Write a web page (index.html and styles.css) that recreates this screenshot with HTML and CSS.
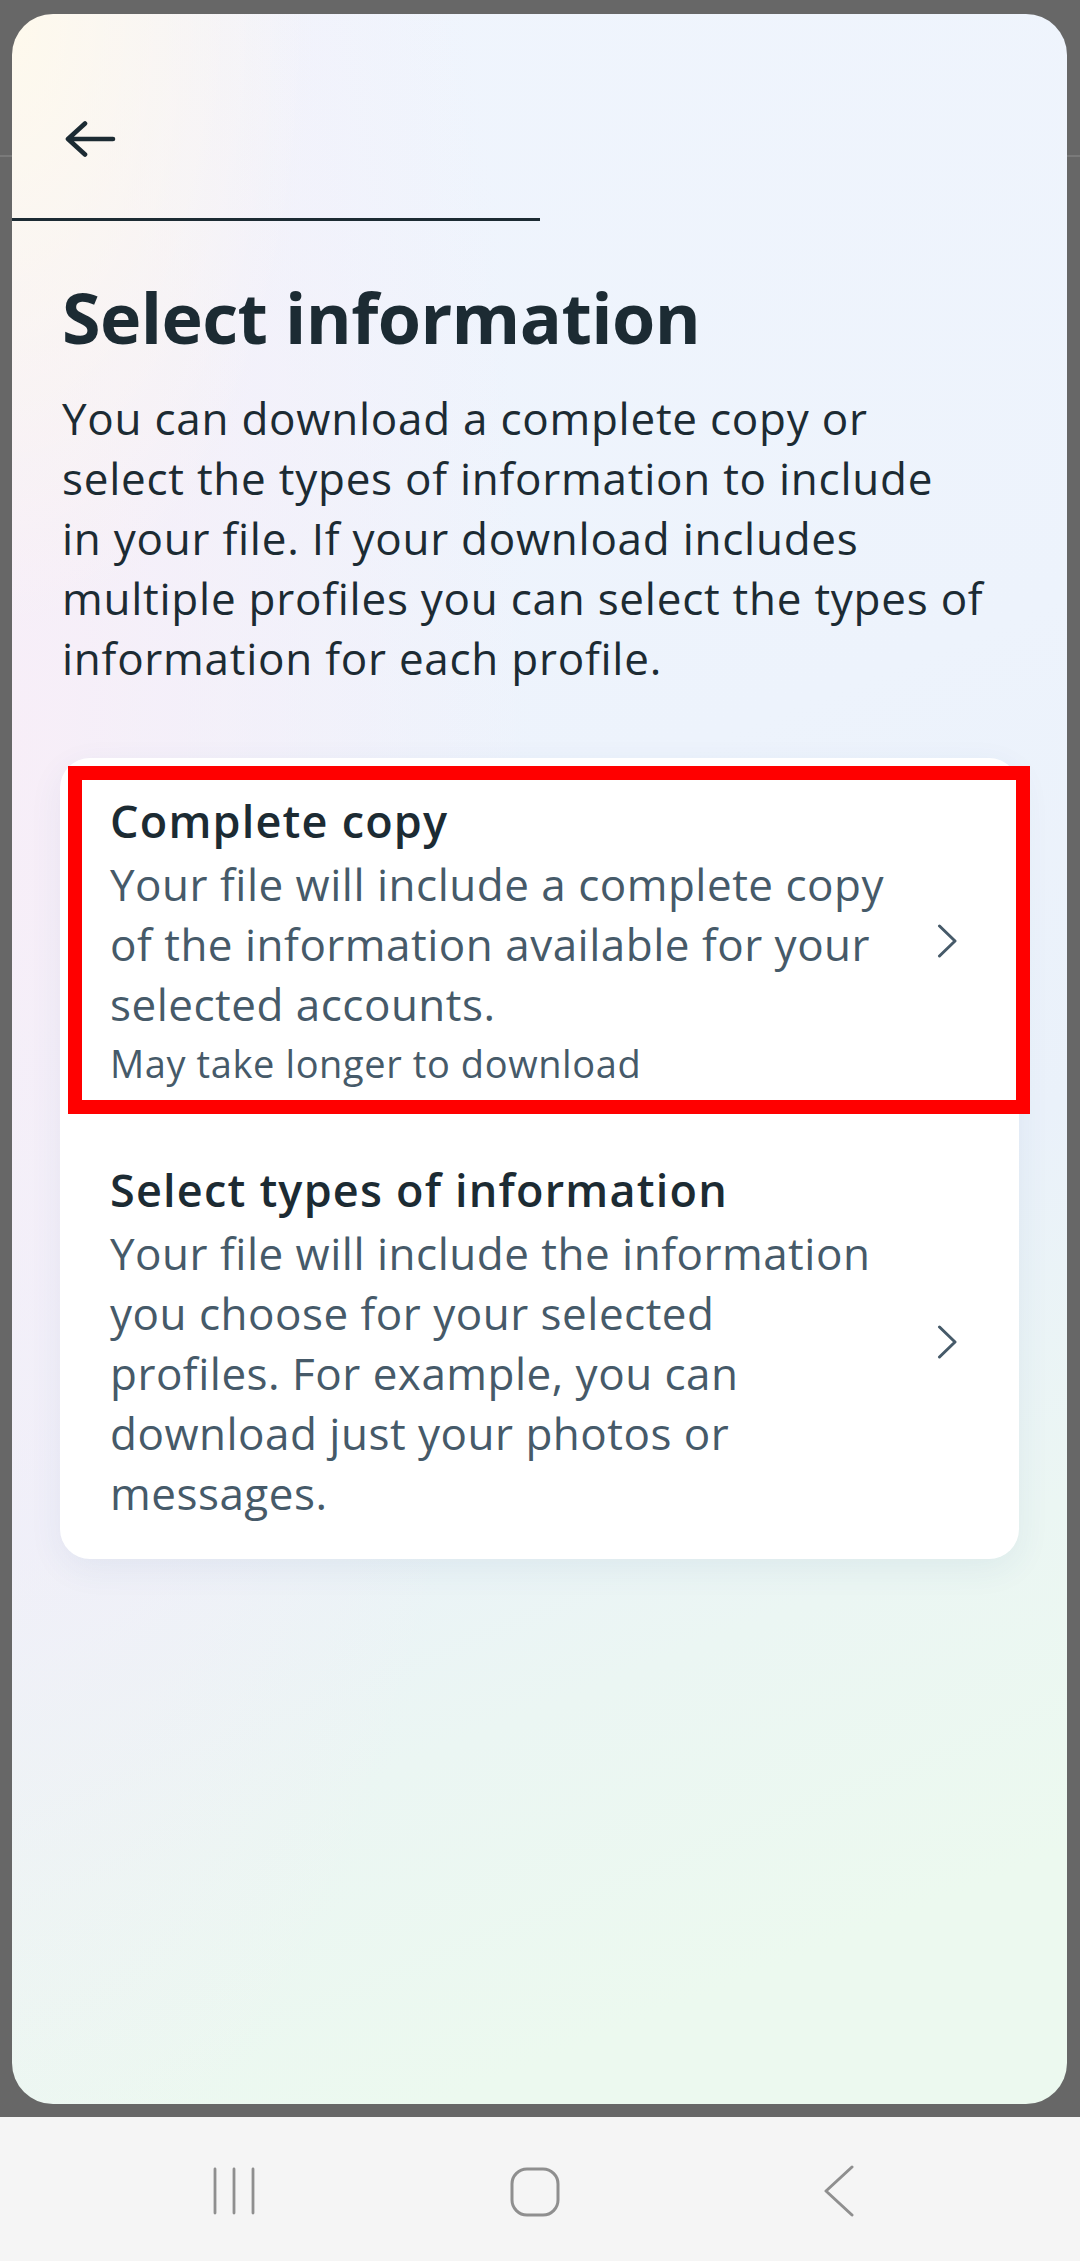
FILE: index.html
```html
<!DOCTYPE html>
<html lang="en">
<head>
<meta charset="utf-8">
<title>Select information</title>
<link rel="stylesheet" href="styles.css">
</head>
<body>
<div class="screen">
  <div class="sheet">
    <div class="header">
      <svg class="back" width="52" height="40" viewBox="0 0 52 40" aria-label="Back">
        <path d="M3 20 H48 M20 4.5 L3 20 L20 35.5" fill="none" stroke="#1c2b33" stroke-width="4.6" stroke-linecap="round" stroke-linejoin="round"/>
      </svg>
    </div>
    <div class="progress"></div>
    <div class="content">
      <h1 class="title">Select information</h1>
      <p class="intro">You can download a complete copy or<br>select the types of information to include<br>in your file. If your download includes<br>multiple profiles you can select the types of<br>information for each profile.</p>
      <div class="card">
        <div class="option">
          <div class="option-text">
            <div class="option-title">Complete copy</div>
            <div class="option-desc">Your file will include a complete copy<br>of the information available for your<br>selected accounts.</div>
            <div class="option-note">May take longer to download</div>
          </div>
          <svg class="chev" width="22" height="34" viewBox="0 0 22 34"><path d="M3.5 2 L19 17 L3.5 32" fill="none" stroke="#465a69" stroke-width="3" stroke-linecap="round" stroke-linejoin="round"/></svg>
        </div>
        <div class="option">
          <div class="option-text">
            <div class="option-title">Select types of information</div>
            <div class="option-desc">Your file will include the information<br>you choose for your selected<br>profiles. For example, you can<br>download just your photos or<br>messages.</div>
          </div>
          <svg class="chev" width="22" height="34" viewBox="0 0 22 34"><path d="M3.5 2 L19 17 L3.5 32" fill="none" stroke="#465a69" stroke-width="3" stroke-linecap="round" stroke-linejoin="round"/></svg>
        </div>
        <div class="highlight"></div>
      </div>
    </div>
  </div>
  <div class="nav">
    <svg class="nav-recents" width="44" height="48" viewBox="0 0 44 48"><path d="M3 2 V46 M22 2 V46 M41 2 V46" fill="none" stroke="#8f8f8f" stroke-width="2.8" stroke-linecap="round"/></svg>
    <svg class="nav-home" width="50" height="50" viewBox="0 0 50 50"><rect x="2" y="2" width="46" height="46" rx="15" fill="none" stroke="#8f8f8f" stroke-width="3"/></svg>
    <svg class="nav-back" width="32" height="52" viewBox="0 0 32 52"><path d="M29 2 L3 26 L29 50" fill="none" stroke="#8f8f8f" stroke-width="3" stroke-linecap="round" stroke-linejoin="round"/></svg>
  </div>
</div>
</body>
</html>
```

FILE: styles.css
```css
* { box-sizing: border-box; }

html, body {
  margin: 0;
  padding: 0;
}

body {
  width: 1080px;
  height: 2261px;
  overflow: hidden;
  background: linear-gradient(to bottom, #676767 0, #676767 155px, #7a7a7a 155px, #7a7a7a 157px, #676767 157px);
  font-family: "Open Sans", "Noto Sans", "Liberation Sans", sans-serif;
  color: #1c2b33;
}

.screen {
  display: flex;
  flex-direction: column;
  height: 2261px;
}

.sheet {
  margin: 14px 13px 0 12px;
  height: 2090px;
  border-radius: 41px;
  overflow: hidden;
  background:
    radial-gradient(ellipse 300px 620px at 0 0, rgba(255, 250, 236, 0.95), rgba(255, 250, 236, 0) 100%),
    radial-gradient(ellipse 520px 1500px at 0 35%, rgba(249, 237, 247, 0.85), rgba(249, 237, 247, 0) 100%),
    linear-gradient(158deg, #f0f5fd 0%, #edf3fc 40%, #eaf1fa 60%, #ebf6f3 76%, #ecf9ef 90%, #ecf9ef 100%);
}

.header {
  height: 204px;
  padding: 105px 0 0 53px;
}

.back { display: block; }

.progress {
  width: 528px;
  height: 3px;
  background: #1c2b33;
}

.content {
  padding: 0 48px;
}

.title {
  margin: 54px 0 0 2px;
  font-size: 70px;
  line-height: 84px;
  font-weight: 700;
  letter-spacing: -0.6px;
  white-space: nowrap;
}

.intro {
  margin: 29px 0 0 2px;
  font-size: 44px;
  line-height: 60px;
  font-weight: 400;
  letter-spacing: 0.75px;
  white-space: nowrap;
}

.card {
  position: relative;
  margin-top: 70px;
  background: #ffffff;
  border-radius: 30px;
  box-shadow: 0 10px 34px rgba(40, 80, 140, 0.07);
}

.option {
  display: flex;
  align-items: center;
  padding: 33px 61px 36px 50px;
}

.option-text {
  flex: 1;
  min-width: 0;
  white-space: nowrap;
}

.option-title {
  font-size: 45px;
  line-height: 60px;
  font-weight: 600;
  letter-spacing: 1.2px;
  color: #1c2b33;
}

.option-desc {
  margin-top: 3px;
  font-size: 44px;
  line-height: 60px;
  letter-spacing: 0.5px;
  color: #465a69;
}

.option-note {
  margin-top: 1px;
  font-size: 38px;
  line-height: 56px;
  letter-spacing: 0.6px;
  color: #465a69;
}

.chev {
  flex: none;
  display: block;
}

.highlight {
  position: absolute;
  left: 8px;
  top: 8px;
  width: 962px;
  height: 348px;
  border: 14px solid #ff0000;
}

.nav {
  margin-top: 13px;
  flex: 1;
  background: #f5f5f5;
  display: flex;
  align-items: center;
  padding-left: 212px;
}

.nav-recents { margin-top: 4px; }
.nav-home { margin-left: 254px; margin-top: 6px; }
.nav-back { margin-left: 263px; margin-top: 4px; }
```
